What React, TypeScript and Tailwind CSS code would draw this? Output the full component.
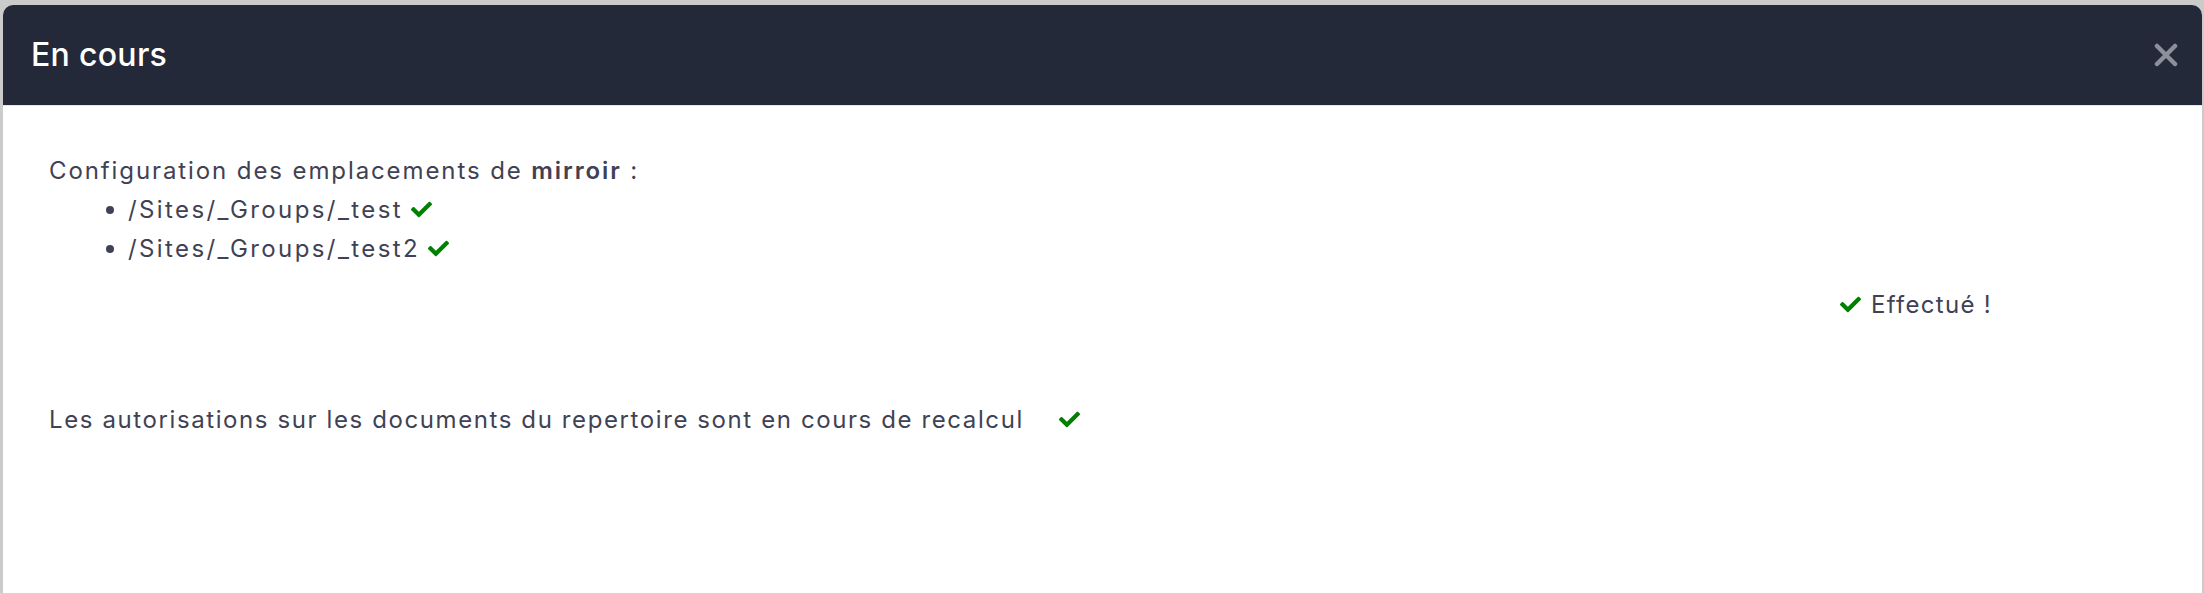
import { FaCheck } from "react-icons/fa"

const font = { fontFamily: "Inter, 'Noto Sans', sans-serif" }

function Check({ className = "" }: { className?: string }) {
  return <FaCheck className={`text-[#008000] shrink-0 ${className}`} size={21} />
}

function CloseIcon() {
  return (
    <svg width="24" height="24" viewBox="0 0 24 24" className="text-[#8d909b]">
      <path d="M3 3 L21 21 M21 3 L3 21" stroke="currentColor" strokeWidth="4.5" strokeLinecap="round" />
    </svg>
  )
}

const paths = ["/Sites/_Groups/_test", "/Sites/_Groups/_test2"]

export default function App() {
  return (
    <div className="min-h-screen bg-[#cbcbcb] pt-[5px] pl-[3px] pr-[2px]" style={font}>
      <div className="flex flex-col min-h-[588px] bg-white rounded-t-[10px] overflow-hidden">
        <div className="flex items-center justify-between h-[101px] bg-[#232939] pl-[28px] pr-[24px] border-b border-[#e5e7ee]">
          <h1 className="text-[32px] font-medium text-white tracking-[0.3px]">En cours</h1>
          <button className="flex items-center justify-center">
            <CloseIcon />
          </button>
        </div>

        <div className="pt-[45px] pl-[46px] text-[24px] leading-[39px] text-[#3f4254] tracking-[1.6px]">
          <p className="tracking-[1.9px]">
            Configuration des emplacements de <b className="font-semibold">mirroir</b> :
          </p>
          <ul>
            {paths.map((p) => (
              <li key={p} className="flex items-center">
                <span className="w-[8px] h-[8px] rounded-full bg-[#3f4254] ml-[57px] mr-[14px]" />
                <span className="tracking-[2.4px]">{p}</span>
                <Check className="ml-[8px]" />
              </li>
            ))}
          </ul>

          <div className="flex items-center justify-end pr-[210px] mt-[17px]">
            <Check className="mr-[10px]" />
            <span className="tracking-[1.3px]">Effectué !</span>
          </div>

          <div className="flex items-center mt-[76px]">
            <span>Les autorisations sur les documents du repertoire sont en cours de recalcul</span>
            <Check className="ml-[35px]" />
          </div>
        </div>
      </div>
    </div>
  )
}
